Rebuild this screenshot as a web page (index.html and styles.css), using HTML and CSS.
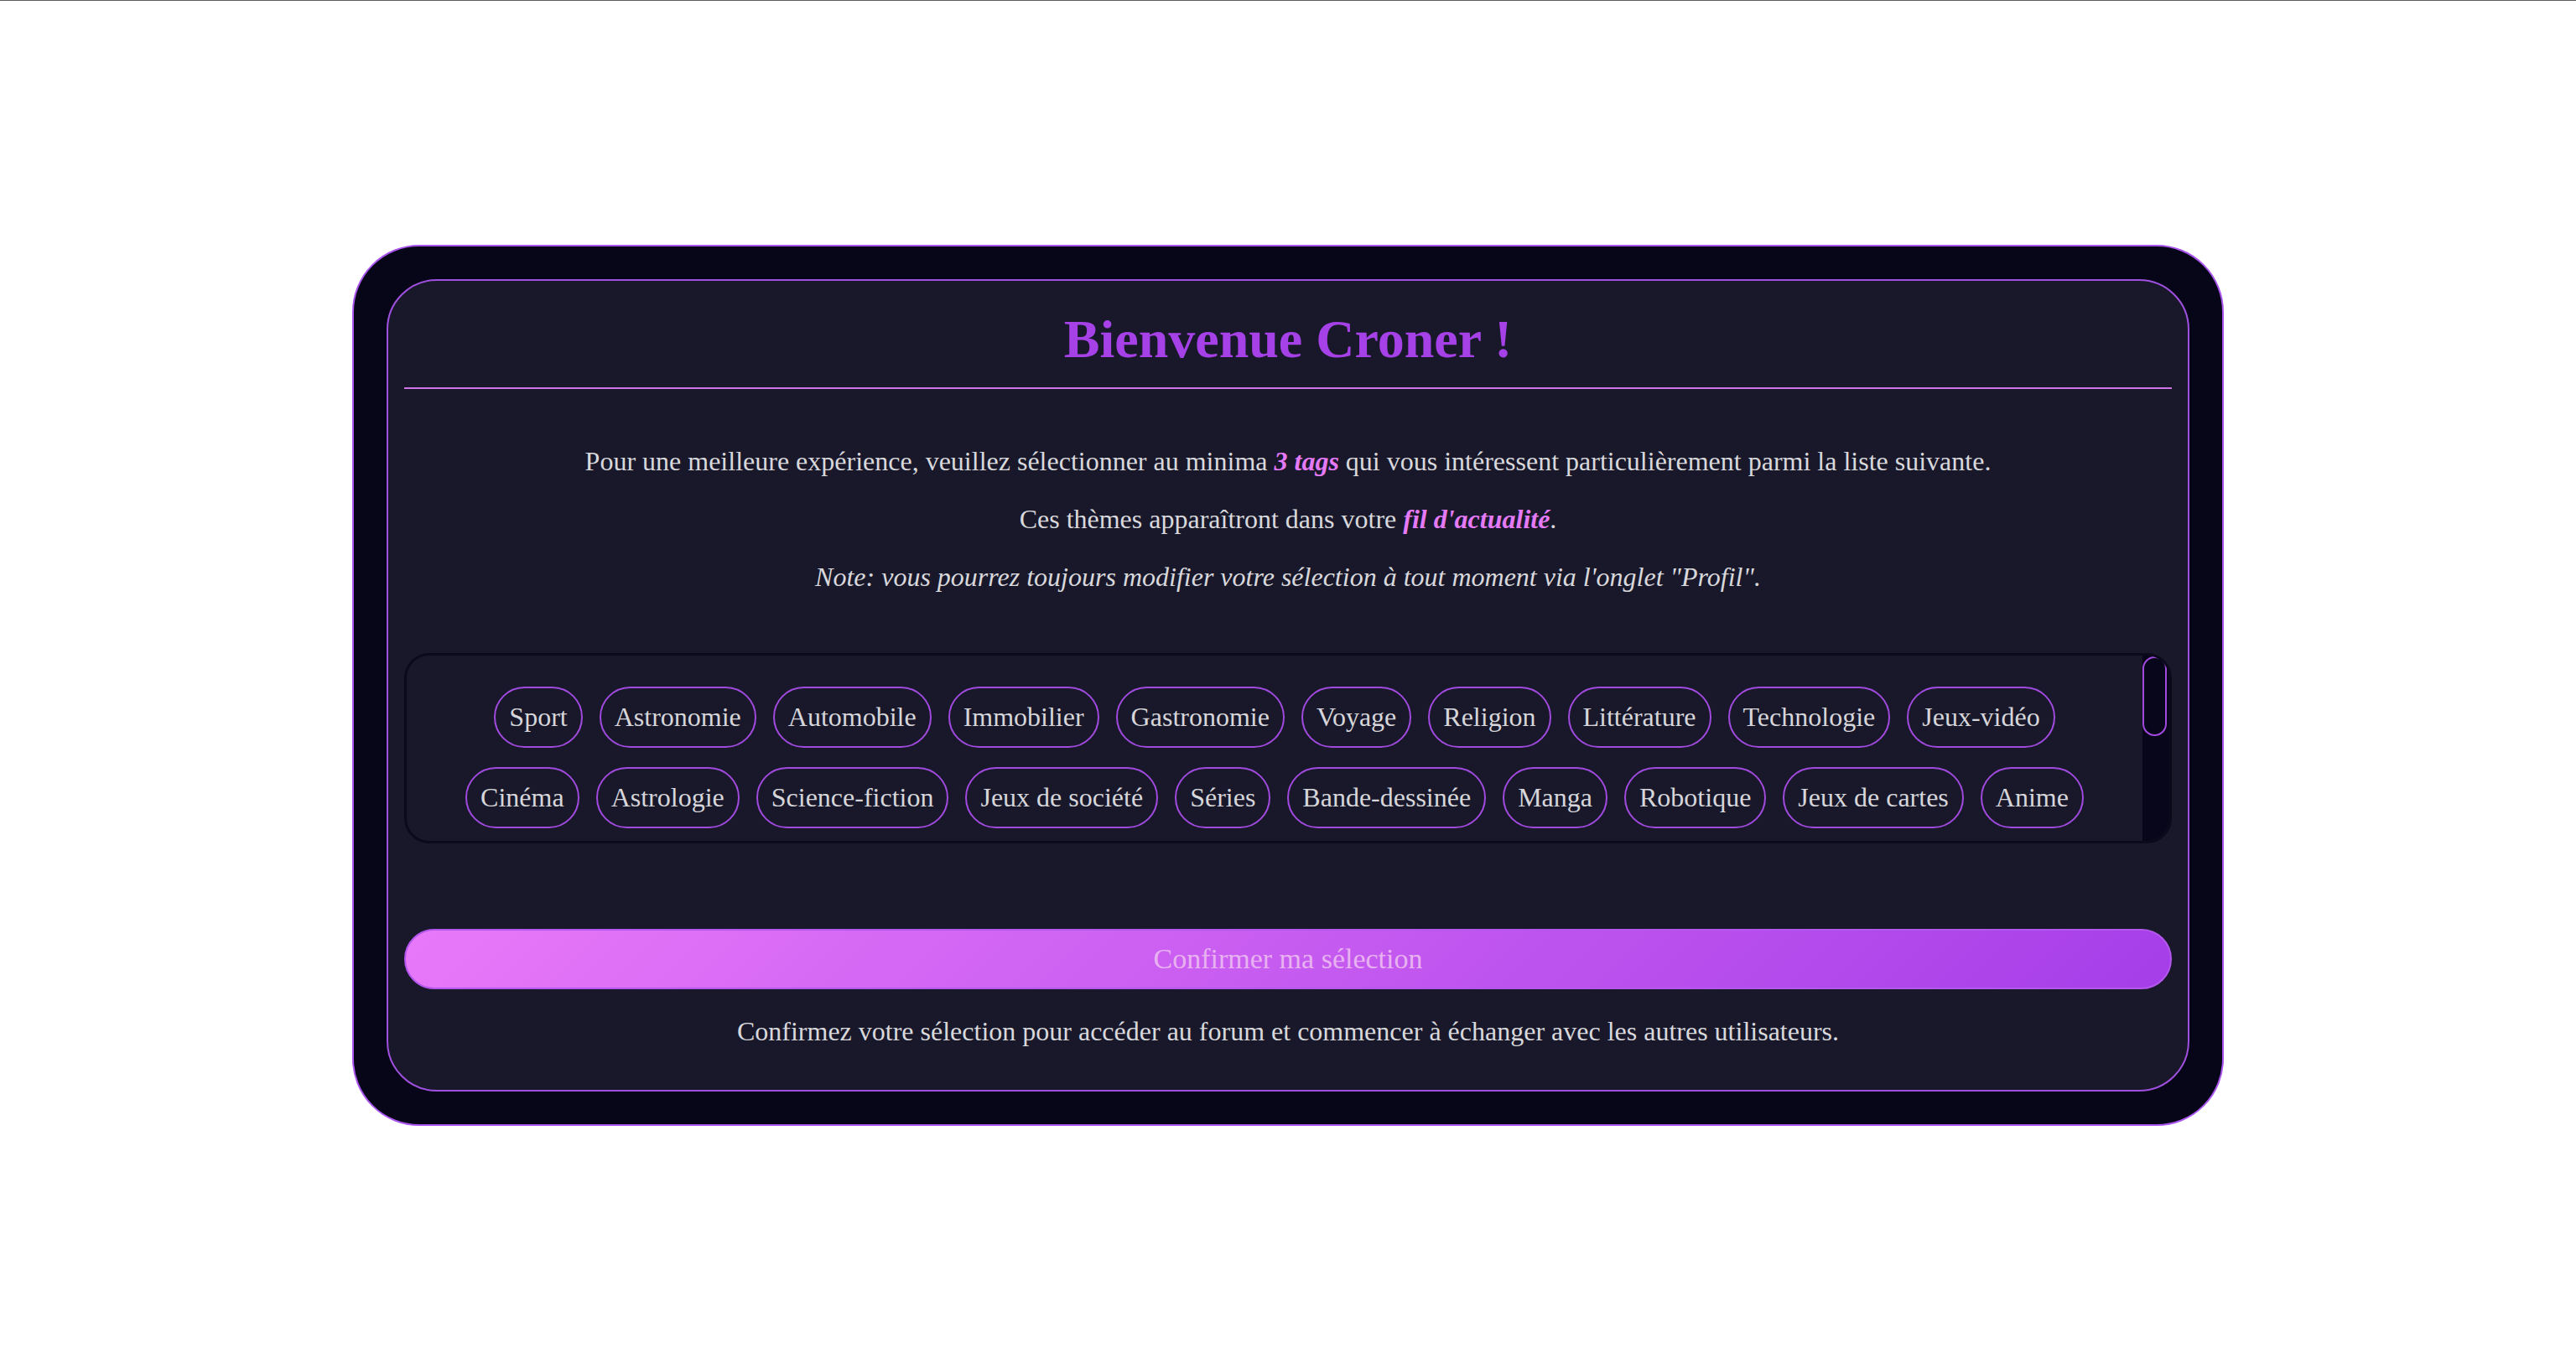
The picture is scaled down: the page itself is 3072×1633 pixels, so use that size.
FILE: index.html
```html
<!DOCTYPE html>
<html lang="fr">
<head>
<meta charset="utf-8">
<title>Bienvenue</title>
<link rel="stylesheet" href="styles.css">
</head>
<body>
<div class="page">
  <main class="card">
    <section class="panel">
      <h1 class="title">Bienvenue Croner !</h1>
      <div class="intro">
        <p>Pour une meilleure expérience, veuillez sélectionner au minima <em class="accent">3 tags</em> qui vous intéressent particulièrement parmi la liste suivante.</p>
        <p>Ces thèmes apparaîtront dans votre <em class="accent">fil d'actualité</em>.</p>
        <p class="note">Note: vous pourrez toujours modifier votre sélection à tout moment via l'onglet "Profil".</p>
      </div>
      <div class="tag-box">
        <div class="tags">
          <span class="tag">Sport</span>
          <span class="tag">Astronomie</span>
          <span class="tag">Automobile</span>
          <span class="tag">Immobilier</span>
          <span class="tag">Gastronomie</span>
          <span class="tag">Voyage</span>
          <span class="tag">Religion</span>
          <span class="tag">Littérature</span>
          <span class="tag">Technologie</span>
          <span class="tag">Jeux-vidéo</span>
          <span class="tag">Cinéma</span>
          <span class="tag">Astrologie</span>
          <span class="tag">Science-fiction</span>
          <span class="tag">Jeux de société</span>
          <span class="tag">Séries</span>
          <span class="tag">Bande-dessinée</span>
          <span class="tag">Manga</span>
          <span class="tag">Robotique</span>
          <span class="tag">Jeux de cartes</span>
          <span class="tag">Anime</span>
        </div>
        <div class="scrollbar" aria-hidden="true"><div class="thumb"></div></div>
      </div>
      <button class="confirm" type="button">Confirmer ma sélection</button>
      <p class="hint">Confirmez votre sélection pour accéder au forum et commencer à échanger avec les autres utilisateurs.</p>
    </section>
  </main>
</div>
</body>
</html>
```
FILE: styles.css
```css
* {
  box-sizing: border-box;
}

html {
  border-top: 1px solid #5c5c5c;
}

body {
  margin: 0;
  background: #ffffff;
  font-family: "Liberation Serif", "Times New Roman", serif;
  font-size: 32px;
  color: #d8d8dc;
}

.page {
  min-height: calc(100vh - 1px);
  display: flex;
  align-items: center;
  justify-content: center;
}

.card {
  width: 2232px;
  padding: 39px;
  background: #070618;
  border: 2px solid #a955ee;
  border-radius: 80px;
}

.panel {
  background: #19182b;
  border: 2px solid #a050e0;
  border-radius: 60px;
  padding: 33px 19px 19px;
}

.title {
  margin: 0;
  padding: 0 0 20px;
  border-bottom: 2px solid #cf74e6;
  text-align: center;
  font-size: 64px;
  font-weight: bold;
  color: #a541e7;
}

.intro {
  padding: 36px 0 40px;
  text-align: center;
}

.intro p {
  margin: 32px 0;
}

.accent {
  font-weight: bold;
  font-style: italic;
  color: #e57af7;
}

.note {
  font-style: italic;
}

.tag-box {
  display: flex;
  height: 227px;
  border: 3px solid #0b0a1b;
  border-radius: 30px;
  overflow: hidden;
}

.tags {
  flex: 1;
  padding: 37px 40px;
  display: flex;
  flex-wrap: wrap;
  justify-content: center;
  align-content: flex-start;
  column-gap: 20px;
  row-gap: 23px;
}

.scrollbar {
  width: 32px;
  padding: 1px 3px 0 0;
  background: #07061a;
}

.thumb {
  height: 95px;
  background: #07061a;
  border: 2px solid #a24ae0;
  border-radius: 15px;
}

.tag {
  display: inline-block;
  padding: 16px 16px;
  border: 2px solid #a04ade;
  border-radius: 40px;
  color: #d6d6da;
  line-height: normal;
  white-space: nowrap;
}

.confirm {
  display: block;
  width: 100%;
  margin-top: 102px;
  padding: 15px 16px;
  font-family: inherit;
  font-size: 34px;
  line-height: normal;
  color: #e8b2f1;
  background: linear-gradient(135deg, #e879f9, #a53ee8);
  border: 2px solid #b457ec;
  border-radius: 40px;
  cursor: pointer;
}

.hint {
  margin: 32px 0;
  text-align: center;
}
```
